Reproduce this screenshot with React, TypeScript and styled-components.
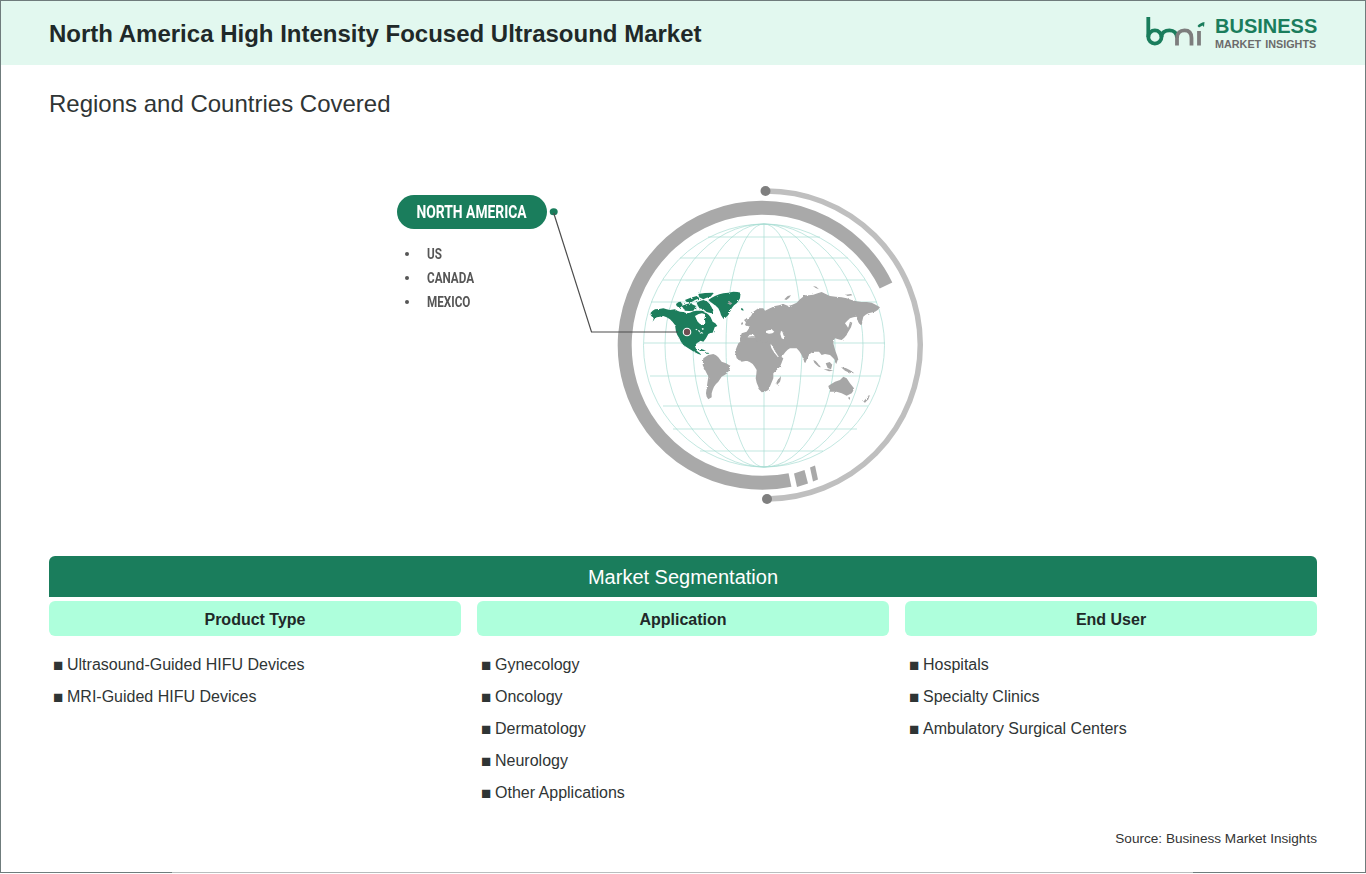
import { FC } from "react";
import styled, { createGlobalStyle } from "styled-components";

const columns = [
  {
    title: "Product Type",
    items: ["Ultrasound-Guided HIFU Devices", "MRI-Guided HIFU Devices"],
  },
  {
    title: "Application",
    items: ["Gynecology", "Oncology", "Dermatology", "Neurology", "Other Applications"],
  },
  {
    title: "End User",
    items: ["Hospitals", "Specialty Clinics", "Ambulatory Surgical Centers"],
  },
];

const meridians = [120.5, 99, 71, 38];

const parallels = [
  [708, 820, 237],
  [680, 848, 258],
  [663, 865, 280],
  [651, 877, 302],
  [644, 885, 343],
  [650, 880, 376],
  [663, 868, 406],
  [673, 857, 429],
  [700, 823, 451],
];

// outlines are traced at 3x, the groups below scale them back
const americaGreen = [
  "M32 98 38 92 45 88 58 87 70 85 80 88 90 90 105 88 112 92 120 95 130 96 140 100 150 98 160 94 172 92 186 92 195 96 200 100 206 104 212 112 218 125 226 130 232 138 224 142 222 148 218 158 211 159 205 162 198 175 190 185 182 182 170 190 165 198 168 206 170 212 178 218 185 225 175 222 165 217 158 213 145 205 130 195 122 184 118 175 112 165 108 155 105 135 98 126 90 118 80 112 70 108 60 110 50 112 43 118 38 125 42 112 36 110 32 105z",
  "M205 60 215 53 225 48 238 43 250 40 265 38 280 35 292 36 302 38 301 46 300 55 295 63 290 70 282 76 275 85 270 95 265 105 258 112 252 118 247 112 243 105 240 95 235 85 228 78 220 72 212 66z",
  "M303 84 309 86 311 92 304 90z",
  "M108 72 116 66 122 65 128 75 124 80 118 84 110 78z",
  "M135 60 152 53 170 48 178 55 165 60 155 66 140 66z",
  "M175 42 195 39 222 38 212 50 200 53 190 58 178 52z",
  "M125 78 138 73 150 70 168 78 164 86 160 92 148 93 135 92z",
  "M170 68 180 63 190 60 200 64 207 70 214 80 220 92 215 100 208 98 200 96 190 88 178 85 173 76z",
  "M172 207 184 207 198 212 190 213 180 212z",
  "M197 218 205 218 208 221 199 221z",
];

const americaHoles = [
  "M165 108 176 102 186 100 196 103 194 114 196 128 188 135 180 132 172 124z",
  "M174 151 178 151 181 156 187 157 190 161 185 160 180 161 179 156 175 154z",
  "M171 146 166 149 169 151 172 149z",
  "M186 144 192 146 189 150 185 148z",
];

const southAmerica =
  "M190 235 197 230 205 225 220 222 228 226 235 232 245 245 258 250 272 258 268 270 262 280 254 285 245 290 240 298 235 305 228 312 222 320 218 330 215 340 215 352 205 358 200 350 198 340 200 325 202 310 205 290 200 280 195 270 188 255z";

const oldWorld = [
  // africa
  "M-60 215 -55 202 -50 190 -40 182 -30 175 -15 172 5 172 20 174 35 175 43 184 50 195 55 208 60 220 72 226 85 235 80 248 75 260 65 270 55 280 55 295 48 312 40 330 30 335 20 337 14 330 10 320 5 308 2 295 4 282 5 270 -1 260 -7 252 -16 246 -25 242 -40 245 -48 240 -55 235z",
  // eurasia
  "M-45 175 -40 160 -25 155 -15 140 -30 135 -25 120 -12 108 -5 95 10 85 25 85 30 92 45 85 60 78 72 76 85 72 100 78 112 74 125 68 135 58 150 46 162 46 175 44 188 40 200 36 212 42 225 48 242 50 260 52 275 55 290 60 305 64 320 66 335 66 350 68 362 74 375 82 368 90 360 95 340 100 332 104 325 110 322 122 318 135 312 130 310 125 308 116 305 110 295 112 285 115 277 122 270 130 276 138 280 145 279 155 275 165 268 173 260 180 250 178 240 175 236 182 235 190 238 202 242 215 247 228 250 240 240 240 232 232 225 225 210 222 200 225 192 215 175 215 168 219 162 225 156 238 150 250 145 238 140 225 133 214 125 205 105 205 98 209 92 215 85 224 78 232 70 227 62 220 56 208 50 195 40 185 25 190 15 180 5 185 0 170 -15 170 -25 175 -35 185 -45 185z",
  // britain, iceland
  "M-33 120 -27 116 -24 126 -19 136 -28 138 -25 130z",
  "M-41 128 -36 127 -36 133 -42 134z",
  "M-83 70 -75 66 -68 70 -74 75z",
  // madagascar
  "M68 300 74 293 78 288 77 298 75 305 66 315 64 308z",
  // japan, sakhalin
  "M285 125 292 128 288 142 280 155 268 168 255 178 250 176 262 166 272 156 280 142z",
  "M306 118 312 112 316 118 322 128 319 136 312 128z",
  // arctic islands
  "M88 58 98 48 108 46 102 54 94 60z",
  "M174 18 184 20 192 28 182 24z",
  "M272 44 288 42 292 46 278 48z",
  // maritime asia
  "M175 240 182 243 190 252 198 262 192 261 184 254 178 248z",
  "M206 268 220 268 235 272 222 274z",
  "M212 250 224 246 232 254 228 268 218 264z",
  "M240 226 245 228 248 240 244 252 240 246z",
  "M258 262 272 264 284 270 298 280 284 278 270 272z",
  "M148 236 152 240 151 248 148 244z",
  // australia, new zealand
  "M220 318 230 311 240 305 255 300 265 290 275 295 285 310 297 325 294 334 290 340 275 347 260 340 245 335 225 335z",
  "M280 352 285 352 285 357 281 357z",
  "M325 365 338 350 345 345 340 358 330 368z",
];

const oldWorldHoles = [
  "M33 153 42 150 52 150 58 155 52 160 42 161 33 158z",
  "M78 152 82 155 86 167 86 178 80 175 76 162z",
  "M-22 171 -10 168 0 168 -4 164 -16 164z",
  "M46 193 50 195 60 214 72 232 69 232 58 218 49 204z",
];

const Logo: FC = () => (
  <LogoWrap>
    <svg width="59" height="32" viewBox="0 0 59 32" aria-hidden="true">
      <g fill="none" strokeWidth="3.800">
        <path d="M2.300 0V20" stroke="#1a7d5c" />
        <circle cx="8.900" cy="20" r="6.600" stroke="#1a7d5c" />
        <path d="M15.500 20c0-4.500 3.500-6.700 8-6.700 4.500 0 7.500 3 7.500 7.700" stroke="#1a7d5c" />
        <path d="M31 20V28.500M31 21c0-5 3-7.700 7.500-7.700 4.500 0 7 2.700 7 7.700V28.500" stroke="#7d7d7d" />
        <path d="M53 14V28.500" stroke="#7d7d7d" />
      </g>
      <path d="M51.500 9c1.500-2 4-3.500 7-4l-.5 5-1.500-1.500-3.500 2z" fill="#1a7d5c" />
    </svg>
    <LogoText>
      <LogoMain>BUSINESS</LogoMain>
      <LogoSub>MARKET INSIGHTS</LogoSub>
    </LogoText>
  </LogoWrap>
);

const Globe: FC = () => (
  <GlobeSvg viewBox="547 180 378 330" aria-hidden="true">
    <defs>
      {/* roughens the traced coastlines */}
      <filter id="coast" x="-5%" y="-5%" width="110%" height="110%">
        <feTurbulence type="fractalNoise" baseFrequency="0.35" numOctaves="2" seed="4" />
        <feDisplacementMap in="SourceGraphic" scale="2.500" />
      </filter>
    </defs>

    <g fill="none" stroke="#a8dcd3" strokeWidth="0.700">
      {meridians.map((rx) => (
        <ellipse key={rx} cx="764" cy="345.500" rx={rx} ry="121.500" />
      ))}
      <path d="M764 224V467" />
      {parallels.map(([a, b, y]) => (
        <path key={y} d={`M${a} ${y}H${b}`} />
      ))}
    </g>

    <path
      d="M886 285.500A137.500 137.500 0 1 0 790 480"
      fill="none"
      stroke="#a9a9a9"
      strokeWidth="14"
    />
    <path d="M794 473.500L804.500 470L808 483.500L797 487z" fill="#a9a9a9" />
    <path d="M810 467.500L815 465.500L818 479.500L813 481.500z" fill="#a9a9a9" />
    <path
      d="M765.500 191A154 154 0 0 1 767 499"
      fill="none"
      stroke="#bfbfbf"
      strokeWidth="5.500"
    />
    <circle cx="765.500" cy="191" r="5" fill="#7f7f7f" />
    <circle cx="767" cy="499" r="5" fill="#7f7f7f" />

    <g filter="url(#coast)">
      <g transform="translate(640 280) scale(0.3333)">
        <path d={southAmerica} fill="#a6a6a6" />
        <g fill="#1a7d5c">
          {americaGreen.map((d) => (
            <path key={d} d={d} />
          ))}
        </g>
        <g fill="#fff">
          {americaHoles.map((d) => (
            <path key={d} d={d} />
          ))}
        </g>
      </g>
      <g transform="translate(755 280) scale(0.3333)">
        <g fill="#a6a6a6">
          {oldWorld.map((d) => (
            <path key={d} d={d} />
          ))}
        </g>
        <g fill="#fff">
          {oldWorldHoles.map((d) => (
            <path key={d} d={d} />
          ))}
        </g>
      </g>
    </g>

    <circle cx="687" cy="332" r="4.300" fill="#fff" />
    <circle cx="687" cy="332" r="3.200" fill="#6f4f52" />

    <ellipse cx="553.700" cy="211.700" rx="4" ry="3.500" fill="#1a7d5c" />
    <path d="M553.700 213L591.500 332H678" fill="none" stroke="#4d4d4d" strokeWidth="1.200" />
  </GlobeSvg>
);

const App: FC = () => {
  return (
    <>
      <GlobalStyle />
      <Frame>
        <Header>
          <Title>North America High Intensity Focused Ultrasound Market</Title>
          <Logo />
        </Header>
        <Main>
          <Subtitle>Regions and Countries Covered</Subtitle>
          <Figure>
            <Callout>
              <Pill>
                <PillLabel>NORTH AMERICA</PillLabel>
              </Pill>
              <CountryList>
                <Country>
                  <CountryName>US</CountryName>
                </Country>
                <Country>
                  <CountryName>CANADA</CountryName>
                </Country>
                <Country>
                  <CountryName>MEXICO</CountryName>
                </Country>
              </CountryList>
            </Callout>
            <Globe />
          </Figure>
          <SegmentBar>Market Segmentation</SegmentBar>
          <Columns>
            {columns.map((col) => (
              <Column key={col.title}>
                <ColumnHead>{col.title}</ColumnHead>
                <ItemList>
                  {col.items.map((item) => (
                    <Item key={item}>{item}</Item>
                  ))}
                </ItemList>
              </Column>
            ))}
          </Columns>
          <Source>Source: Business Market Insights</Source>
        </Main>
        <BottomEdge />
      </Frame>
    </>
  );
};

const GlobalStyle = createGlobalStyle`
  html, body {
    margin: 0;
    padding: 0;
    background: #fff;
  }
  body {
    font-family: "Liberation Sans", Arial, sans-serif;
  }
`;

const Frame = styled.div`
  box-sizing: border-box;
  display: flex;
  flex-direction: column;
  width: 1366px;
  height: 873px;
  overflow: hidden;
  border-top: 1px solid #6f7c7c;
  border-left: 1px solid #6f7c7c;
  border-right: 1px solid #6f7c7c;
`;

const Header = styled.header`
  display: flex;
  align-items: center;
  justify-content: space-between;
  height: 64px;
  padding: 0 48px;
  background: #e2f8ef;
  flex-shrink: 0;
`;

const Title = styled.h1`
  margin: 2px 0 0;
  font-size: 24px;
  line-height: 28px;
  font-weight: 700;
  color: #1f2929;
`;

const LogoWrap = styled.div`
  display: flex;
  align-items: center;
  gap: 10px;
`;

const LogoText = styled.div`
  display: flex;
  flex-direction: column;
  gap: 2px;
  width: 102px;
`;

const LogoMain = styled.span`
  font-size: 20px;
  line-height: 20px;
  font-weight: 700;
  color: #1a7d5c;
`;

const LogoSub = styled.span`
  font-size: 10.8px;
  line-height: 12px;
  font-weight: 700;
  word-spacing: 1px;
  color: #6b6b6b;
  white-space: nowrap;
`;

const Main = styled.main`
  display: flex;
  flex-direction: column;
  flex: 1;
  padding: 0 48px 24px;
`;

const Subtitle = styled.h2`
  margin: 24px 0 0;
  font-size: 24px;
  line-height: 30px;
  font-weight: 400;
  color: #2f3535;
`;

const Figure = styled.section`
  display: flex;
  margin-top: 61px;
  padding-left: 348px;
  height: 330px;
`;

const Callout = styled.div`
  display: flex;
  flex-direction: column;
  width: 150px;
  padding-top: 14.500px;
  font-family: Roboto, sans-serif;
`;

const Pill = styled.div`
  display: flex;
  align-items: center;
  justify-content: center;
  height: 34px;
  border-radius: 17px;
  background: #1a7d5c;
`;

const PillLabel = styled.span`
  font-size: 18px;
  font-weight: 700;
  color: #fff;
  white-space: nowrap;
  transform: scaleX(0.77);
`;

const CountryList = styled.ul`
  margin: 13.500px 0 0;
  padding: 0 0 0 30px;
  list-style: none;
`;

const Country = styled.li`
  position: relative;
  line-height: 24px;
  height: 24px;

  &::before {
    content: "";
    position: absolute;
    left: -22.500px;
    top: 10px;
    width: 4px;
    height: 4px;
    border-radius: 50%;
    background: #565656;
  }
`;

const CountryName = styled.span`
  display: inline-block;
  font-size: 15px;
  font-weight: 700;
  color: #565656;
  transform: scaleX(0.78);
  transform-origin: left center;
`;

const GlobeSvg = styled.svg`
  display: block;
  width: 378px;
  height: 330px;
  flex-shrink: 0;
  overflow: visible;
`;

const SegmentBar = styled.div`
  display: flex;
  align-items: center;
  justify-content: center;
  box-sizing: border-box;
  margin-top: 46px;
  height: 41px;
  padding-top: 2px;
  border-radius: 6px 6px 0 0;
  background: #1a7d5c;
  color: #fff;
  font-size: 20px;
`;

const Columns = styled.div`
  display: grid;
  grid-template-columns: repeat(3, 1fr);
  column-gap: 16px;
  margin-top: 4px;
`;

const Column = styled.div`
  display: flex;
  flex-direction: column;
`;

const ColumnHead = styled.div`
  display: flex;
  align-items: center;
  justify-content: center;
  box-sizing: border-box;
  height: 35px;
  padding-top: 2px;
  border-radius: 6px;
  background: #aeffdc;
  color: #1f2929;
  font-size: 16px;
  font-weight: 700;
`;

const ItemList = styled.ul`
  margin: 13px 0 0;
  padding: 0 0 0 4px;
  list-style: none;
`;

const Item = styled.li`
  display: flex;
  align-items: center;
  height: 32px;
  font-size: 16px;
  color: #2f3535;

  &::before {
    content: "■";
    width: 14px;
    font-size: 17px;
    line-height: 32px;
    padding-top: 2px;
  }
`;

const Source = styled.div`
  margin-top: auto;
  text-align: right;
  font-size: 13.600px;
  line-height: 18px;
  color: #333;
`;

const BottomEdge = styled.div`
  height: 1px;
  flex-shrink: 0;
  background: linear-gradient(
    to right,
    #6f7c7c 0,
    #6f7c7c 171px,
    #b9bebe 171px,
    #b9bebe 1192px,
    #6f7c7c 1192px
  );
`;

export default App;
